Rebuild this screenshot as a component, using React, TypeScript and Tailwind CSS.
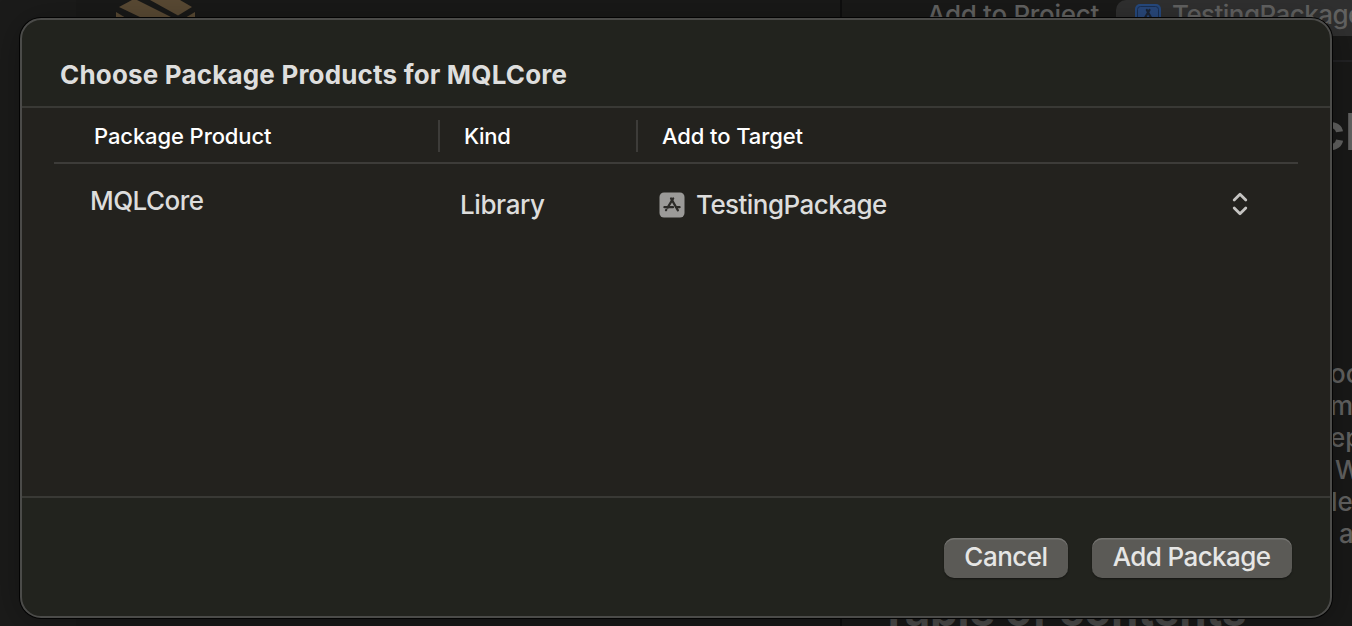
import React from "react";

const paragraphTails = [
  { text: "oc", indent: "pl-[7px]" },
  { text: "m", indent: "pl-[7px]" },
  { text: "ep", indent: "pl-[7px]" },
  { text: "W", indent: "pl-[12px]" },
  { text: "le", indent: "pl-[8px]" },
  { text: "a", indent: "pl-[16px]" },
];

function TargetIcon({ className }: { className: string }) {
  return (
    <svg viewBox="0 0 26 26" className={className}>
      <rect x="0.5" y="0.5" width="25" height="25" rx="4.5" fill="#9b9a98" />
      <g stroke="#2c2b28" strokeWidth="2.2" strokeLinecap="round" fill="none">
        <path d="M14.2 6.4L8.6 15.6" />
        <path d="M12 6.4L18.9 18.4" />
        <path d="M5.4 15.2H14M17.6 15.2H20.6" />
        <path d="M7.3 17.7L7 18.2" />
      </g>
    </svg>
  );
}

function ProjectIcon() {
  return (
    <svg viewBox="0 0 26 26" className="h-[26px] w-[26px] shrink-0">
      <rect width="26" height="26" rx="5" fill="#264a80" />
      <rect x="2.5" y="2.5" width="21" height="21" rx="3" fill="#29497d" stroke="#1a2f52" strokeWidth="1" />
      <g stroke="#1c2535" strokeWidth="2.2" strokeLinecap="round">
        <path d="M14.5 6L8 17M11.8 6L18.5 18" />
        <path d="M6 15H20" />
      </g>
    </svg>
  );
}

function Backdrop() {
  return (
    <div className="flex h-full w-full bg-[#191918] text-[#636362]">
      <div className="flex w-[840px] shrink-0">
        <div className="w-[76px] bg-[#1b1b1a]" />
        <svg viewBox="0 0 80 18" className="ml-10 h-[18px] w-20">
          <g fill="#5a4a34">
            <path d="M3 7L16 0H21L57 18H26Z" />
            <path d="M34 0H64L76 7L62 15.5Z" />
            <path d="M0 12L10 18H0Z" />
            <path d="M79 12V18H69Z" />
          </g>
        </svg>
      </div>
      <div className="w-0.5 shrink-0 bg-[#0e0e0e]" />
      <div className="flex w-[510px] flex-col overflow-hidden">
        <div className="flex h-9 shrink-0">
          <div className="-mt-[3px] w-[274px] shrink-0 pl-[85px] text-[26px] leading-[36px] font-[450] tracking-[-0.3px] whitespace-nowrap">
            Add to Project
          </div>
          <div className="flex w-[260px] shrink-0 rounded-l-[10px] bg-[#303030] pl-[19px]">
            <div className="pt-1">
              <ProjectIcon />
            </div>
            <div className="-mt-[3px] pl-[11px] text-[26px] leading-[36px] font-[450] tracking-[-0.55px] whitespace-nowrap">
              TestingPackage
            </div>
          </div>
        </div>
        <div className="mt-[24px] h-0.5 shrink-0 bg-[#222224]" />
        <div className="mt-[37px] h-[65px] shrink-0 pl-[473px] text-[51px] leading-[65px] font-bold whitespace-nowrap">
          ch
        </div>
        <div className="mt-[194px] flex shrink-0 flex-col pl-[481px] text-[26px] leading-[32px] font-[450]">
          {paragraphTails.map((line) => (
            <div key={line.text} className={line.indent}>
              {line.text}
            </div>
          ))}
        </div>
        <div className="mt-[35px] shrink-0 pl-[37px] text-[44px] leading-[50px] font-bold tracking-[-0.35px] whitespace-nowrap text-[#4c4c4b]">
          Table of contents
        </div>
      </div>
    </div>
  );
}

function Dialog() {
  return (
    <div className="absolute top-[18px] left-[20px] flex h-[600px] w-[1312px] flex-col overflow-hidden rounded-[21px] border-2 border-[#4b4b49] bg-[#22231e] shadow-[0_0_0_1px_#030303,0_4px_36px_rgba(0,0,0,0.3)]">
      <header className="flex h-[86px] shrink-0 pt-[38px] pl-[38px]">
        <h1 className="h-[34px] text-[26px] leading-[34px] font-bold tracking-[0.18px] whitespace-nowrap text-[#dededd]">
          Choose Package Products for MQLCore
        </h1>
      </header>
      <main className="flex h-[392px] shrink-0 flex-col border-y-2 border-[#393935] bg-[#23221e] px-8">
        <div className="flex h-[56px] shrink-0 items-start border-b-2 border-[#3d3c39] pt-3 text-[22px] leading-[32px] font-medium tracking-[-0.1px] whitespace-nowrap text-white">
          <div className="h-8 w-[386px] border-r-2 border-[#3d3c39] pl-[40px]">Package Product</div>
          <div className="h-8 w-[198px] border-r-2 border-[#3d3c39] pl-[24px] tracking-[-0.3px]">Kind</div>
          <div className="pl-[24px]">Add to Target</div>
        </div>
        <div className="flex shrink-0 pt-5 text-[26px] leading-[34px] font-[450] tracking-[-0.55px] whitespace-nowrap text-[#dddddc]">
          <div className="w-[384px] pl-[36px]">MQLCore</div>
          <div className="w-[221px] pt-1 pl-[22px] tracking-[-0.4px]">Library</div>
          <div className="flex grow items-center pt-1">
            <TargetIcon className="h-[26px] w-[26px]" />
            <span className="pl-[11px]">TestingPackage</span>
            <svg
              viewBox="0 0 18 26"
              className="mr-[49px] mb-[2px] ml-auto h-[26px] w-[18px]"
              fill="none"
              stroke="#c4c3c1"
              strokeWidth="2.8"
              strokeLinecap="round"
              strokeLinejoin="round"
            >
              <path d="M3.2 9L9 3.2L14.8 9" />
              <path d="M3.2 17L9 22.8L14.8 17" />
            </svg>
          </div>
        </div>
      </main>
      <footer className="flex justify-end gap-6 pt-10 pr-[38px]">
        <button className="h-10 w-[124px] rounded-[10px] bg-[#5b5a56] pb-[2px] text-[26px] leading-[36px] font-[450] tracking-[-0.5px] whitespace-nowrap text-[#e6e6e5] shadow-[inset_0_1.5px_0_#73726f,0_1px_2px_rgba(0,0,0,0.4)]">
          Cancel
        </button>
        <button className="h-10 w-[200px] rounded-[10px] bg-[#5b5a56] pr-px pb-[2px] text-[26px] leading-[36px] font-[450] tracking-[-0.6px] whitespace-nowrap text-[#e6e6e5] shadow-[inset_0_1.5px_0_#73726f,0_1px_2px_rgba(0,0,0,0.4)]">
          Add Package
        </button>
      </footer>
    </div>
  );
}

export default function App() {
  return (
    <div className="relative h-[626px] w-[1352px] overflow-hidden bg-[#191918] font-[Inter,sans-serif]">
      <Backdrop />
      <Dialog />
    </div>
  );
}
